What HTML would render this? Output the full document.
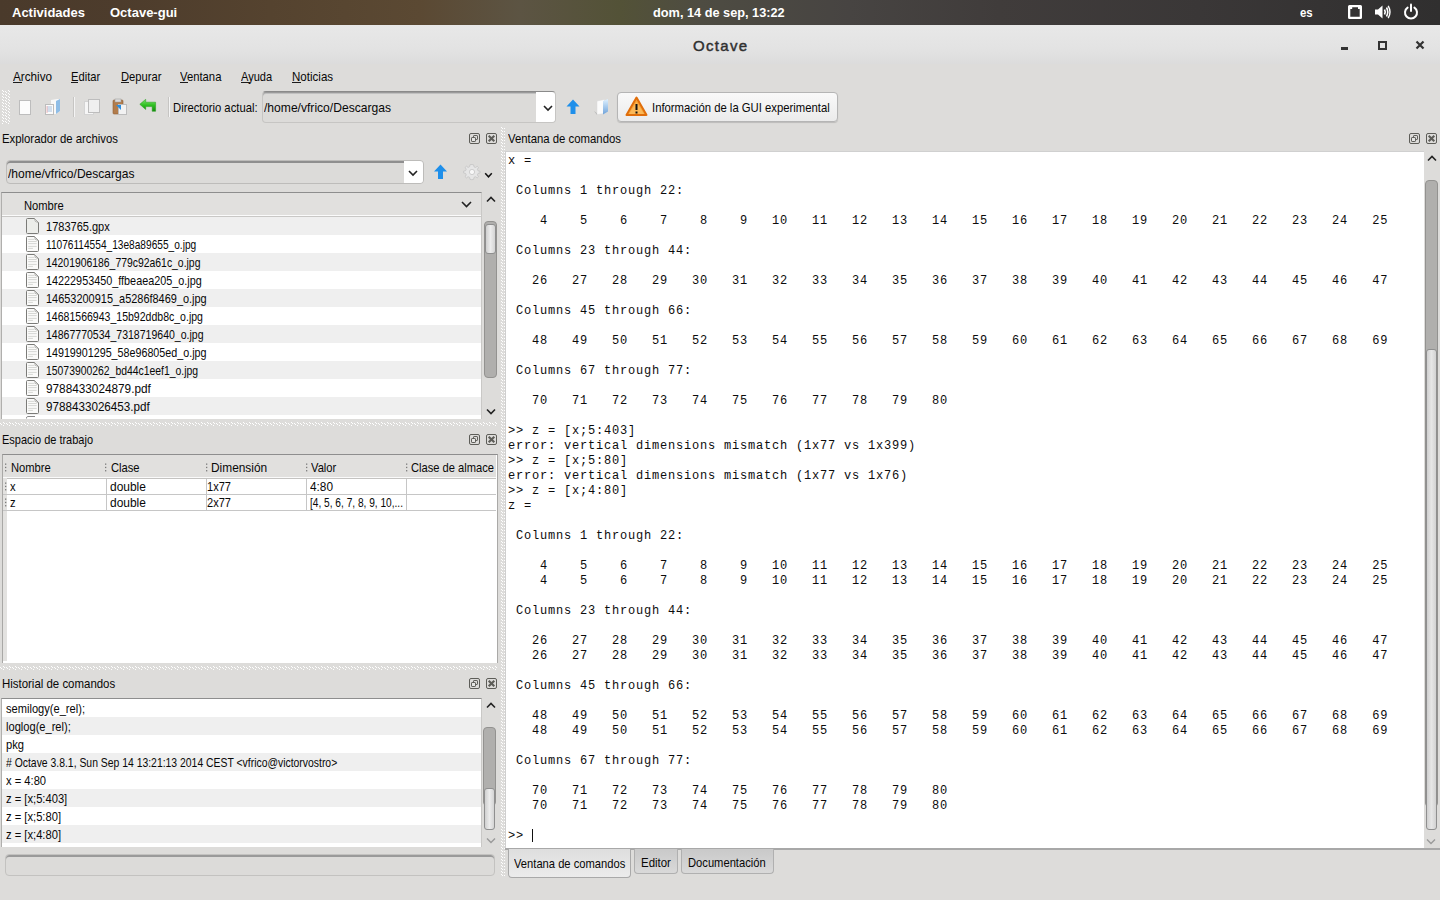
<!DOCTYPE html><html><head><meta charset="utf-8"><title>Octave</title><style>
*{margin:0;padding:0;box-sizing:border-box}
html,body{width:1440px;height:900px;overflow:hidden;background:#dddcda;font-family:"Liberation Sans",sans-serif;color:#1b1b1b}
.a{position:absolute}
.t{position:absolute;white-space:pre;transform-origin:0 0}
.mono{position:absolute;font-family:"Liberation Mono",monospace;font-size:12px;letter-spacing:.8px;line-height:15px;white-space:pre;color:#0c0c0c}
svg{position:absolute;overflow:visible}
</style></head><body>
<svg width="0" height="0" style="position:absolute"><defs><pattern id="dots" width="2" height="2" patternUnits="userSpaceOnUse"><rect width="1" height="1" fill="#f7f7f7"/><rect x="1" y="1" width="1" height="1" fill="#f7f7f7"/></pattern><pattern id="hd" width="6" height="4" patternUnits="userSpaceOnUse"><rect x="0" y="1" width="1" height="1" fill="#fff"/><rect x="1" y="2" width="1" height="1" fill="#fff"/><rect x="3" y="0" width="1" height="1" fill="#fff"/><rect x="4" y="1" width="1" height="1" fill="#fff"/><rect x="3" y="3" width="1" height="1" fill="#fff"/></pattern><pattern id="tbd" width="6" height="3" patternUnits="userSpaceOnUse"><rect x="0" y="0" width="1" height="1" fill="#fff"/><rect x="1" y="1" width="1" height="1" fill="#fff"/><rect x="3" y="1" width="1" height="1" fill="#fff"/><rect x="4" y="2" width="1" height="1" fill="#fff"/></pattern><pattern id="vd" width="5" height="3" patternUnits="userSpaceOnUse"><rect x="0" y="0" width="1" height="1" fill="#fff"/><rect x="1" y="1" width="1" height="1" fill="#fff"/><rect x="3" y="1" width="1" height="1" fill="#fff"/></pattern></defs></svg>
<div class="a" style="left:0px;top:0px;width:1440px;height:25px;background:linear-gradient(90deg,#4a3a2b 0px,#4d3c2c 120px,#55432f 270px,#5b4933 420px,#5c5443 520px,#535237 620px,#4e4c42 700px,#474442 850px,#403c3b 1000px,#3a3737 1200px,#302f2f 1440px)"></div>
<div class="t" style="left:12px;top:6px;font-size:13px;line-height:13px;transform:scaleX(1.0);color:#fff;font-weight:bold;">Actividades</div>
<div class="t" style="left:110px;top:6px;font-size:13px;line-height:13px;transform:scaleX(1.0);color:#fff;font-weight:bold;">Octave-gui</div>
<div class="t" style="left:653px;top:6px;font-size:13px;line-height:13px;transform:scaleX(0.98);color:#fff;font-weight:bold;">dom, 14 de sep, 13:22</div>
<div class="t" style="left:1300px;top:6px;font-size:13px;line-height:13px;transform:scaleX(0.88);color:#fff;font-weight:bold;">es</div>
<svg style="left:1347px;top:4px" width="16" height="16"><path d="M2.5 1 H13.5 Q15 1 15 2.5 V13.5 Q15 15 13.5 15 H2.5 Q1 15 1 13.5 V2.5 Q1 1 2.5 1Z M3.3 5.1 H5.2 V3.2 H11 V5.1 H12.7 V12.7 H3.3 Z" fill="#fff" fill-rule="evenodd"/></svg>
<svg style="left:1374px;top:4px" width="17" height="16"><path d="M1 5.5 H4 L8.5 1.5 V14.5 L4 10.5 H1Z" fill="#fff"/><path d="M10.5 5.5 Q12 8 10.5 10.5" stroke="#fff" stroke-width="1.6" fill="none"/><path d="M12.5 3.5 Q15 8 12.5 12.5" stroke="#fff" stroke-width="1.6" fill="none"/><path d="M14.2 1.8 Q17.8 8 14.2 14.2" stroke="#fff" stroke-width="1.4" fill="none"/></svg>
<svg style="left:1403px;top:3px" width="16" height="17"><path d="M4.6 4.6 A6 6 0 1 0 11.4 4.6" stroke="#fff" stroke-width="2" fill="none" stroke-linecap="round"/><path d="M8 1.5 V8" stroke="#fff" stroke-width="2" stroke-linecap="round"/></svg>
<div class="a" style="left:0px;top:25px;width:1440px;height:39px;background:linear-gradient(#e8e8e8,#e3e3e3 60%,#dcdcdc)"></div>
<div class="t" style="left:693px;top:38px;font-size:15px;line-height:15px;transform:scaleX(1.0);color:#303030;font-weight:normal;letter-spacing:1.3px;-webkit-text-stroke:.45px #303030">Octave</div>
<div class="a" style="left:1341px;top:47px;width:7px;height:3px;background:#333"></div>
<div class="a" style="left:1378px;top:41px;width:9px;height:9px;border:2px solid #333"></div>
<svg style="left:1415px;top:40px" width="10" height="10"><path d="M1.5 1.5L8.5 8.5M8.5 1.5L1.5 8.5" stroke="#333" stroke-width="2.2" stroke-linecap="butt"/></svg>
<div class="t" style="left:13px;top:70px;font-size:13px;line-height:13px;transform:scaleX(0.9);color:#080808;font-weight:normal;">Archivo</div>
<div class="a" style="left:13px;top:82px;width:9px;height:1px;background:#1b1b1b"></div>
<div class="t" style="left:71px;top:70px;font-size:13px;line-height:13px;transform:scaleX(0.86);color:#080808;font-weight:normal;">Editar</div>
<div class="a" style="left:71px;top:82px;width:7px;height:1px;background:#1b1b1b"></div>
<div class="t" style="left:121px;top:70px;font-size:13px;line-height:13px;transform:scaleX(0.86);color:#080808;font-weight:normal;">Depurar</div>
<div class="a" style="left:121px;top:82px;width:8px;height:1px;background:#1b1b1b"></div>
<div class="t" style="left:180px;top:70px;font-size:13px;line-height:13px;transform:scaleX(0.868);color:#080808;font-weight:normal;">Ventana</div>
<div class="a" style="left:180px;top:82px;width:8px;height:1px;background:#1b1b1b"></div>
<div class="t" style="left:241px;top:70px;font-size:13px;line-height:13px;transform:scaleX(0.85);color:#080808;font-weight:normal;">Ayuda</div>
<div class="a" style="left:241px;top:82px;width:9px;height:1px;background:#1b1b1b"></div>
<div class="t" style="left:292px;top:70px;font-size:13px;line-height:13px;transform:scaleX(0.889);color:#080808;font-weight:normal;">Noticias</div>
<div class="a" style="left:292px;top:82px;width:9px;height:1px;background:#1b1b1b"></div>
<svg style="left:2px;top:90px" width="8" height="34"><rect width="8" height="34" fill="url(#tbd)"/></svg>
<svg style="left:19px;top:100px" width="13" height="16"><rect x="0.5" y="0.5" width="11" height="14" fill="#fcfcfc" stroke="#bdbdbd"/></svg>
<svg style="left:44px;top:98px" width="18" height="18"><path d="M7 2 L13 1 L16 1 L16 13 L12 16 L7 16Z" fill="#f8f8f8"/><path d="M12 3 L16 1 L16 13 L12 16Z" fill="#8fbde6"/><rect x="1.5" y="6.5" width="8" height="10" fill="#fbfbfb" stroke="#bcbcbc"/><path d="M3 9h5M3 11h5M3 13h5" stroke="#a9c2df" stroke-width="1"/><path d="M3 8v7" stroke="#f0a0a0" stroke-width=".7"/></svg>
<div class="a" style="left:73px;top:97px;width:1px;height:20px;background:#c6c5c3;box-shadow:1px 0 0 #f4f4f4"></div>
<svg style="left:84px;top:98px" width="18" height="18"><rect x="0.5" y="3.5" width="9" height="13" fill="#f6f6f6" stroke="#d4d4d4"/><rect x="4.5" y="1.5" width="11" height="13" fill="#efefef" stroke="#bdbdbd"/></svg>
<svg style="left:112px;top:98px" width="18" height="18"><rect x="1" y="2" width="10" height="14" rx="1" fill="#b27c4b" stroke="#8f6038" stroke-width=".6"/><rect x="3" y="1" width="6" height="3" fill="#dcdcdc" stroke="#999" stroke-width=".5"/><rect x="6.5" y="6.5" width="8" height="10" fill="#f2f2f2" stroke="#bdbdbd"/><path d="M4 7 L9 7 L9 12 Z" fill="#2a8ee0"/></svg>
<svg style="left:139px;top:98px" width="18" height="16"><defs><linearGradient id="gr" x1="0" y1="0" x2="0" y2="1"><stop offset="0" stop-color="#7be36a"/><stop offset=".5" stop-color="#2fbf22"/><stop offset="1" stop-color="#148a0e"/></linearGradient></defs><path d="M0.8 6.3 L6.7 1.3 L6.7 4.2 L16.6 4.2 L16.6 13.3 L13.2 13.3 L13.2 8.6 L6.7 8.6 L6.7 11.5 Z" fill="url(#gr)" stroke="#1e9a16" stroke-width=".5"/></svg>
<div class="a" style="left:168px;top:97px;width:1px;height:20px;background:#c6c5c3;box-shadow:1px 0 0 #f4f4f4"></div>
<div class="t" style="left:173px;top:101px;font-size:13px;line-height:13px;transform:scaleX(0.867);color:#080808;font-weight:normal;">Directorio actual:</div>
<div class="a" style="left:262px;top:91px;width:294px;height:32px;border:1px solid #c6c5c3;border-top-color:#8a8a8a;border-radius:4px;background:#dcdbd9;box-shadow:inset 0 1px 0 #9a9a9a,inset 0 2px 0 #c0c0c0"></div>
<div class="a" style="left:536px;top:92px;width:19px;height:30px;background:#fff;border-radius:0 3px 3px 0"></div>
<svg style="left:543px;top:105px" width="10" height="7"><path d="M1 1 L5 5 L9 1" fill="none" stroke="#222" stroke-width="1.6"/></svg>
<div class="t" style="left:264px;top:101px;font-size:13px;line-height:13px;transform:scaleX(0.93);color:#080808;font-weight:normal;">/home/vfrico/Descargas</div>
<svg style="left:566px;top:99px" width="14" height="16"><path d="M7 0.5 L13.5 7.5 L9.5 7.5 L9.5 15 L4.5 15 L4.5 7.5 L0.5 7.5 Z" fill="#1e8fea"/></svg>
<svg style="left:593px;top:98px" width="16" height="18"><defs><linearGradient id="fb" x1="0" y1="0" x2="0" y2="1"><stop offset="0" stop-color="#dff1ff"/><stop offset="1" stop-color="#6fa3da"/></linearGradient></defs><path d="M1 13 L4.5 15.5 L4 17 Z" fill="#b5b5b5"/><path d="M4 3 L11.5 1.5 L11.5 15.5 L4 16.5 Z" fill="#fbfbfb" stroke="#d8d8d8" stroke-width=".5"/><path d="M10 3 L15 1 L15 13.5 L10 16.5 Z" fill="url(#fb)"/></svg>
<div class="a" style="left:617px;top:92px;width:221px;height:30px;border:1px solid #b5b5b5;border-radius:4px;background:linear-gradient(#f9f9f9,#ebebeb);box-shadow:0 1px 1px rgba(0,0,0,.15)"></div>
<svg style="left:625px;top:96px" width="23" height="21"><path d="M11.5 1.5 L21.5 19 L1.5 19 Z" fill="#f7a53a" stroke="#e06e0b" stroke-width="2" stroke-linejoin="round"/><path d="M11.5 6 L19 18 L4 18Z" fill="#fbb858"/><rect x="10.5" y="8" width="2" height="6" fill="#111"/><rect x="10.5" y="15.5" width="2" height="2" fill="#111"/></svg>
<div class="t" style="left:652px;top:101px;font-size:13px;line-height:13px;transform:scaleX(0.869);color:#080808;font-weight:normal;">Información de la GUI experimental</div>
<div class="t" style="left:2px;top:132px;font-size:13px;line-height:13px;transform:scaleX(0.872);color:#080808;font-weight:normal;">Explorador de archivos</div>
<svg style="left:469px;top:133px" width="11" height="11"><rect x="0.5" y="0.5" width="10" height="10" rx="1.5" fill="none" stroke="#5d5d58"/><rect x="4.5" y="2.5" width="4" height="4" rx=".6" fill="none" stroke="#5d5d58"/><rect x="2.5" y="4.5" width="4" height="4" rx=".6" fill="#e6e6e4" stroke="#5d5d58"/></svg>
<svg style="left:486px;top:133px" width="11" height="11"><rect x="0.5" y="0.5" width="10" height="10" rx="1.5" fill="none" stroke="#5d5d58"/><path d="M2.7 2.7L8.3 8.3M8.3 2.7L2.7 8.3" stroke="#5d5d58" stroke-width="2.1"/></svg>
<div class="a" style="left:6px;top:160px;width:418px;height:24px;border:1px solid #bdbcba;border-radius:4px;background:#dcdbd9;box-shadow:inset 0 2px 0 #8f8f8f"></div>
<div class="a" style="left:404px;top:161px;width:19px;height:22px;background:#fff;border-radius:0 3px 3px 0"></div>
<svg style="left:408px;top:170px" width="10" height="7"><path d="M1 1 L5 5 L9 1" fill="none" stroke="#222" stroke-width="1.6"/></svg>
<div class="t" style="left:8px;top:167px;font-size:13px;line-height:13px;transform:scaleX(0.926);color:#080808;font-weight:normal;">/home/vfrico/Descargas</div>
<svg style="left:434px;top:164px" width="14" height="16"><path d="M6.5 0.5 L13 7.5 L9 7.5 L9 15 L4 15 L4 7.5 L0 7.5 Z" fill="#1e8fea"/></svg>
<svg style="left:463px;top:163px" width="18" height="18"><g fill="#e6e6e6" stroke="#c4c4c4" stroke-width=".8"><path d="M9 1.5l1.6.3.4 2 1.5.7 1.7-1.2 1.3 1.2-1.1 1.8.6 1.5 2 .4v1.8l-2 .4-.6 1.5 1.1 1.8-1.3 1.2-1.7-1.2-1.5.7-.4 2-1.8.3-1.8-.3-.4-2-1.5-.7-1.7 1.2-1.3-1.2 1.1-1.8-.6-1.5-2-.4V8.1l2-.4.6-1.5-1.1-1.8 1.3-1.2 1.7 1.2 1.5-.7.4-2z"/></g><circle cx="9" cy="9" r="2.6" fill="#f8f8f8" stroke="#c4c4c4" stroke-width=".8"/></svg>
<svg style="left:484px;top:172px" width="10" height="7"><path d="M1.2 1.2 L4.5 4.8 L7.8 1.2" fill="none" stroke="#111" stroke-width="1.5"/></svg>
<div class="a" style="left:1px;top:192px;width:481px;height:227px;background:#fff;border-left:1px solid #b0afad;border-top:1px solid #8e8e8e;border-right:1px solid #c9c8c6"></div>
<div class="a" style="left:2px;top:193px;width:479px;height:22px;background:#e1e0de"></div>
<div class="a" style="left:2px;top:215px;width:479px;height:1px;background:#fbfbfb"></div>
<div class="a" style="left:2px;top:216px;width:479px;height:1px;background:#c9c8c6"></div>
<div class="t" style="left:24px;top:199px;font-size:13px;line-height:13px;transform:scaleX(0.86);color:#080808;font-weight:normal;">Nombre</div>
<svg style="left:461px;top:201px" width="11" height="7"><path d="M1 1 L5.5 5.5 L10 1" fill="none" stroke="#222" stroke-width="1.6"/></svg>
<div class="a" style="left:2px;top:217px;width:479px;height:18px;background:#efefef"></div>
<svg style="left:26px;top:218px" width="14" height="17"><path d="M0.5 1.5 Q0.5 0.5 1.5 0.5 L8.5 0.5 L12.5 4.5 L12.5 14.5 Q12.5 15.5 11.5 15.5 L1.5 15.5 Q0.5 15.5 0.5 14.5Z" fill="#fafaf9" stroke="#7b7b78" stroke-width="1"/><path d="M1 1 L8.5 1 L12 4.5 L12 15 L1 15Z" fill="#ecedea"/><path d="M8.5 0.8 Q8.5 4.3 12.2 4.5" fill="#fff" stroke="#9a9a97" stroke-width=".8"/></svg>
<div class="t" style="left:46px;top:220px;font-size:13px;line-height:13px;transform:scaleX(0.848);color:#080808;font-weight:normal;">1783765.gpx</div>
<svg style="left:26px;top:236px" width="14" height="17"><path d="M0.5 1.5 Q0.5 0.5 1.5 0.5 L8.5 0.5 L12.5 4.5 L12.5 14.5 Q12.5 15.5 11.5 15.5 L1.5 15.5 Q0.5 15.5 0.5 14.5Z" fill="#fafaf9" stroke="#7b7b78" stroke-width="1"/><path d="M2.2 3.4h6.3M2.2 5.5h8.5M2.2 7.6h8.5M2.2 10.4h8.5M2.2 12.4h4.7" stroke="#d6d7d4" stroke-width="1"/><path d="M8.5 0.8 Q8.5 4.3 12.2 4.5" fill="#fff" stroke="#9a9a97" stroke-width=".8"/></svg>
<div class="t" style="left:46px;top:238px;font-size:13px;line-height:13px;transform:scaleX(0.78);color:#080808;font-weight:normal;">11076114554_13e8a89655_o.jpg</div>
<div class="a" style="left:2px;top:253px;width:479px;height:18px;background:#efefef"></div>
<svg style="left:26px;top:254px" width="14" height="17"><path d="M0.5 1.5 Q0.5 0.5 1.5 0.5 L8.5 0.5 L12.5 4.5 L12.5 14.5 Q12.5 15.5 11.5 15.5 L1.5 15.5 Q0.5 15.5 0.5 14.5Z" fill="#fafaf9" stroke="#7b7b78" stroke-width="1"/><path d="M2.2 3.4h6.3M2.2 5.5h8.5M2.2 7.6h8.5M2.2 10.4h8.5M2.2 12.4h4.7" stroke="#d6d7d4" stroke-width="1"/><path d="M8.5 0.8 Q8.5 4.3 12.2 4.5" fill="#fff" stroke="#9a9a97" stroke-width=".8"/></svg>
<div class="t" style="left:46px;top:256px;font-size:13px;line-height:13px;transform:scaleX(0.8);color:#080808;font-weight:normal;">14201906186_779c92a61c_o.jpg</div>
<svg style="left:26px;top:272px" width="14" height="17"><path d="M0.5 1.5 Q0.5 0.5 1.5 0.5 L8.5 0.5 L12.5 4.5 L12.5 14.5 Q12.5 15.5 11.5 15.5 L1.5 15.5 Q0.5 15.5 0.5 14.5Z" fill="#fafaf9" stroke="#7b7b78" stroke-width="1"/><path d="M2.2 3.4h6.3M2.2 5.5h8.5M2.2 7.6h8.5M2.2 10.4h8.5M2.2 12.4h4.7" stroke="#d6d7d4" stroke-width="1"/><path d="M8.5 0.8 Q8.5 4.3 12.2 4.5" fill="#fff" stroke="#9a9a97" stroke-width=".8"/></svg>
<div class="t" style="left:46px;top:274px;font-size:13px;line-height:13px;transform:scaleX(0.833);color:#080808;font-weight:normal;">14222953450_ffbeaea205_o.jpg</div>
<div class="a" style="left:2px;top:289px;width:479px;height:18px;background:#efefef"></div>
<svg style="left:26px;top:290px" width="14" height="17"><path d="M0.5 1.5 Q0.5 0.5 1.5 0.5 L8.5 0.5 L12.5 4.5 L12.5 14.5 Q12.5 15.5 11.5 15.5 L1.5 15.5 Q0.5 15.5 0.5 14.5Z" fill="#fafaf9" stroke="#7b7b78" stroke-width="1"/><path d="M2.2 3.4h6.3M2.2 5.5h8.5M2.2 7.6h8.5M2.2 10.4h8.5M2.2 12.4h4.7" stroke="#d6d7d4" stroke-width="1"/><path d="M8.5 0.8 Q8.5 4.3 12.2 4.5" fill="#fff" stroke="#9a9a97" stroke-width=".8"/></svg>
<div class="t" style="left:46px;top:292px;font-size:13px;line-height:13px;transform:scaleX(0.842);color:#080808;font-weight:normal;">14653200915_a5286f8469_o.jpg</div>
<svg style="left:26px;top:308px" width="14" height="17"><path d="M0.5 1.5 Q0.5 0.5 1.5 0.5 L8.5 0.5 L12.5 4.5 L12.5 14.5 Q12.5 15.5 11.5 15.5 L1.5 15.5 Q0.5 15.5 0.5 14.5Z" fill="#fafaf9" stroke="#7b7b78" stroke-width="1"/><path d="M2.2 3.4h6.3M2.2 5.5h8.5M2.2 7.6h8.5M2.2 10.4h8.5M2.2 12.4h4.7" stroke="#d6d7d4" stroke-width="1"/><path d="M8.5 0.8 Q8.5 4.3 12.2 4.5" fill="#fff" stroke="#9a9a97" stroke-width=".8"/></svg>
<div class="t" style="left:46px;top:310px;font-size:13px;line-height:13px;transform:scaleX(0.81);color:#080808;font-weight:normal;">14681566943_15b92ddb8c_o.jpg</div>
<div class="a" style="left:2px;top:325px;width:479px;height:18px;background:#efefef"></div>
<svg style="left:26px;top:326px" width="14" height="17"><path d="M0.5 1.5 Q0.5 0.5 1.5 0.5 L8.5 0.5 L12.5 4.5 L12.5 14.5 Q12.5 15.5 11.5 15.5 L1.5 15.5 Q0.5 15.5 0.5 14.5Z" fill="#fafaf9" stroke="#7b7b78" stroke-width="1"/><path d="M2.2 3.4h6.3M2.2 5.5h8.5M2.2 7.6h8.5M2.2 10.4h8.5M2.2 12.4h4.7" stroke="#d6d7d4" stroke-width="1"/><path d="M8.5 0.8 Q8.5 4.3 12.2 4.5" fill="#fff" stroke="#9a9a97" stroke-width=".8"/></svg>
<div class="t" style="left:46px;top:328px;font-size:13px;line-height:13px;transform:scaleX(0.81);color:#080808;font-weight:normal;">14867770534_7318719640_o.jpg</div>
<svg style="left:26px;top:344px" width="14" height="17"><path d="M0.5 1.5 Q0.5 0.5 1.5 0.5 L8.5 0.5 L12.5 4.5 L12.5 14.5 Q12.5 15.5 11.5 15.5 L1.5 15.5 Q0.5 15.5 0.5 14.5Z" fill="#fafaf9" stroke="#7b7b78" stroke-width="1"/><path d="M2.2 3.4h6.3M2.2 5.5h8.5M2.2 7.6h8.5M2.2 10.4h8.5M2.2 12.4h4.7" stroke="#d6d7d4" stroke-width="1"/><path d="M8.5 0.8 Q8.5 4.3 12.2 4.5" fill="#fff" stroke="#9a9a97" stroke-width=".8"/></svg>
<div class="t" style="left:46px;top:346px;font-size:13px;line-height:13px;transform:scaleX(0.825);color:#080808;font-weight:normal;">14919901295_58e96805ed_o.jpg</div>
<div class="a" style="left:2px;top:361px;width:479px;height:18px;background:#efefef"></div>
<svg style="left:26px;top:362px" width="14" height="17"><path d="M0.5 1.5 Q0.5 0.5 1.5 0.5 L8.5 0.5 L12.5 4.5 L12.5 14.5 Q12.5 15.5 11.5 15.5 L1.5 15.5 Q0.5 15.5 0.5 14.5Z" fill="#fafaf9" stroke="#7b7b78" stroke-width="1"/><path d="M2.2 3.4h6.3M2.2 5.5h8.5M2.2 7.6h8.5M2.2 10.4h8.5M2.2 12.4h4.7" stroke="#d6d7d4" stroke-width="1"/><path d="M8.5 0.8 Q8.5 4.3 12.2 4.5" fill="#fff" stroke="#9a9a97" stroke-width=".8"/></svg>
<div class="t" style="left:46px;top:364px;font-size:13px;line-height:13px;transform:scaleX(0.8);color:#080808;font-weight:normal;">15073900262_bd44c1eef1_o.jpg</div>
<svg style="left:26px;top:380px" width="14" height="17"><path d="M0.5 1.5 Q0.5 0.5 1.5 0.5 L8.5 0.5 L12.5 4.5 L12.5 14.5 Q12.5 15.5 11.5 15.5 L1.5 15.5 Q0.5 15.5 0.5 14.5Z" fill="#fafaf9" stroke="#7b7b78" stroke-width="1"/><path d="M2.2 3.4h6.3M2.2 5.5h8.5M2.2 7.6h8.5M2.2 10.4h8.5M2.2 12.4h4.7" stroke="#d6d7d4" stroke-width="1"/><path d="M8.5 0.8 Q8.5 4.3 12.2 4.5" fill="#fff" stroke="#9a9a97" stroke-width=".8"/></svg>
<div class="t" style="left:46px;top:382px;font-size:13px;line-height:13px;transform:scaleX(0.906);color:#080808;font-weight:normal;">9788433024879.pdf</div>
<div class="a" style="left:2px;top:397px;width:479px;height:18px;background:#efefef"></div>
<svg style="left:26px;top:398px" width="14" height="17"><path d="M0.5 1.5 Q0.5 0.5 1.5 0.5 L8.5 0.5 L12.5 4.5 L12.5 14.5 Q12.5 15.5 11.5 15.5 L1.5 15.5 Q0.5 15.5 0.5 14.5Z" fill="#fafaf9" stroke="#7b7b78" stroke-width="1"/><path d="M2.2 3.4h6.3M2.2 5.5h8.5M2.2 7.6h8.5M2.2 10.4h8.5M2.2 12.4h4.7" stroke="#d6d7d4" stroke-width="1"/><path d="M8.5 0.8 Q8.5 4.3 12.2 4.5" fill="#fff" stroke="#9a9a97" stroke-width=".8"/></svg>
<div class="t" style="left:46px;top:400px;font-size:13px;line-height:13px;transform:scaleX(0.897);color:#080808;font-weight:normal;">9788433026453.pdf</div>
<svg style="left:26px;top:416px" width="14" height="3"><path d="M0.5 2.5 Q0.5 0.5 1.5 0.5 L9 0.5" fill="none" stroke="#7a7a7a" stroke-width=".9"/></svg>
<div class="a" style="left:482px;top:193px;width:16px;height:226px;background:#dddcda"></div>
<svg style="left:486px;top:196px" width="10" height="7"><path d="M1 5.5 L5 1.5 L9 5.5" fill="none" stroke="#222" stroke-width="1.6"/></svg>
<div class="a" style="left:484px;top:221px;width:13px;height:157px;border-radius:4px;background:#b0afad;border:1px solid #939290"></div>
<div class="a" style="left:485px;top:224px;width:11px;height:30px;border-radius:3px;background:linear-gradient(90deg,#d0d0d0,#ececec 50%,#d4d4d4);border:1px solid #8f8f8f"></div>
<svg style="left:486px;top:408px" width="10" height="7"><path d="M1 1.5 L5 5.5 L9 1.5" fill="none" stroke="#222" stroke-width="1.6"/></svg>
<svg style="left:0px;top:422px" width="498" height="4"><rect width="498" height="4" fill="url(#hd)"/></svg>
<div class="t" style="left:2px;top:433px;font-size:13px;line-height:13px;transform:scaleX(0.845);color:#080808;font-weight:normal;">Espacio de trabajo</div>
<svg style="left:469px;top:434px" width="11" height="11"><rect x="0.5" y="0.5" width="10" height="10" rx="1.5" fill="none" stroke="#5d5d58"/><rect x="4.5" y="2.5" width="4" height="4" rx=".6" fill="none" stroke="#5d5d58"/><rect x="2.5" y="4.5" width="4" height="4" rx=".6" fill="#e6e6e4" stroke="#5d5d58"/></svg>
<svg style="left:486px;top:434px" width="11" height="11"><rect x="0.5" y="0.5" width="10" height="10" rx="1.5" fill="none" stroke="#5d5d58"/><path d="M2.7 2.7L8.3 8.3M8.3 2.7L2.7 8.3" stroke="#5d5d58" stroke-width="2.1"/></svg>
<div class="a" style="left:2px;top:454px;width:496px;height:209px;background:#fff;border-left:1px solid #a9a8a6;border-top:1px solid #8e8e8e;border-right:1px solid #aaa9a7"></div>
<div class="a" style="left:3px;top:455px;width:493px;height:23px;background:#e1e0de"></div>
<div class="a" style="left:3px;top:477px;width:493px;height:1px;background:#fafafa"></div>
<div class="a" style="left:3px;top:478px;width:493px;height:1px;background:#c4c3c1"></div>
<div class="a" style="left:3px;top:478px;width:4px;height:183px;background:#e3e2e0"></div>
<svg style="left:5px;top:463px" width="2" height="10"><rect x="0" y="0.5" width="1.3" height="1.3" fill="#7a7a7a"/><rect x="0" y="3.8" width="1.3" height="1.3" fill="#7a7a7a"/><rect x="0" y="7.1" width="1.3" height="1.3" fill="#7a7a7a"/></svg>
<svg style="left:105px;top:463px" width="2" height="10"><rect x="0" y="0.5" width="1.3" height="1.3" fill="#7a7a7a"/><rect x="0" y="3.8" width="1.3" height="1.3" fill="#7a7a7a"/><rect x="0" y="7.1" width="1.3" height="1.3" fill="#7a7a7a"/></svg>
<svg style="left:206px;top:463px" width="2" height="10"><rect x="0" y="0.5" width="1.3" height="1.3" fill="#7a7a7a"/><rect x="0" y="3.8" width="1.3" height="1.3" fill="#7a7a7a"/><rect x="0" y="7.1" width="1.3" height="1.3" fill="#7a7a7a"/></svg>
<svg style="left:306px;top:463px" width="2" height="10"><rect x="0" y="0.5" width="1.3" height="1.3" fill="#7a7a7a"/><rect x="0" y="3.8" width="1.3" height="1.3" fill="#7a7a7a"/><rect x="0" y="7.1" width="1.3" height="1.3" fill="#7a7a7a"/></svg>
<svg style="left:406px;top:463px" width="2" height="10"><rect x="0" y="0.5" width="1.3" height="1.3" fill="#7a7a7a"/><rect x="0" y="3.8" width="1.3" height="1.3" fill="#7a7a7a"/><rect x="0" y="7.1" width="1.3" height="1.3" fill="#7a7a7a"/></svg>
<div class="a" style="left:106px;top:479px;width:1px;height:32px;background:#c6c6c6"></div>
<div class="a" style="left:206px;top:479px;width:1px;height:32px;background:#c6c6c6"></div>
<div class="a" style="left:306px;top:479px;width:1px;height:32px;background:#c6c6c6"></div>
<div class="a" style="left:406px;top:479px;width:1px;height:32px;background:#c6c6c6"></div>
<div class="a" style="left:3px;top:494px;width:493px;height:1px;background:#c6c6c6"></div>
<div class="a" style="left:3px;top:510px;width:493px;height:1px;background:#c6c6c6"></div>
<div class="t" style="left:11px;top:461px;font-size:13px;line-height:13px;transform:scaleX(0.86);color:#080808;font-weight:normal;">Nombre</div>
<div class="t" style="left:111px;top:461px;font-size:13px;line-height:13px;transform:scaleX(0.86);color:#080808;font-weight:normal;">Clase</div>
<div class="t" style="left:211px;top:461px;font-size:13px;line-height:13px;transform:scaleX(0.915);color:#080808;font-weight:normal;">Dimensión</div>
<div class="t" style="left:311px;top:461px;font-size:13px;line-height:13px;transform:scaleX(0.86);color:#080808;font-weight:normal;">Valor</div>
<div class="t" style="left:411px;top:461px;font-size:13px;line-height:13px;transform:scaleX(0.857);color:#080808;font-weight:normal;">Clase de almace</div>
<div class="t" style="left:10px;top:480px;font-size:13px;line-height:13px;transform:scaleX(0.86);color:#080808;font-weight:normal;">x</div>
<div class="t" style="left:10px;top:496px;font-size:13px;line-height:13px;transform:scaleX(0.86);color:#080808;font-weight:normal;">z</div>
<svg style="left:5px;top:482px" width="2" height="10"><rect x="0" y="0.5" width="1.3" height="1.3" fill="#7a7a7a"/><rect x="0" y="3.8" width="1.3" height="1.3" fill="#7a7a7a"/><rect x="0" y="7.1" width="1.3" height="1.3" fill="#7a7a7a"/></svg>
<svg style="left:5px;top:498px" width="2" height="10"><rect x="0" y="0.5" width="1.3" height="1.3" fill="#7a7a7a"/><rect x="0" y="3.8" width="1.3" height="1.3" fill="#7a7a7a"/><rect x="0" y="7.1" width="1.3" height="1.3" fill="#7a7a7a"/></svg>
<div class="t" style="left:110px;top:480px;font-size:13px;line-height:13px;transform:scaleX(0.92);color:#080808;font-weight:normal;">double</div>
<div class="t" style="left:110px;top:496px;font-size:13px;line-height:13px;transform:scaleX(0.92);color:#080808;font-weight:normal;">double</div>
<div class="t" style="left:207px;top:480px;font-size:13px;line-height:13px;transform:scaleX(0.85);color:#080808;font-weight:normal;">1x77</div>
<div class="t" style="left:207px;top:496px;font-size:13px;line-height:13px;transform:scaleX(0.85);color:#080808;font-weight:normal;">2x77</div>
<div class="t" style="left:310px;top:480px;font-size:13px;line-height:13px;transform:scaleX(0.91);color:#080808;font-weight:normal;">4:80</div>
<div class="t" style="left:310px;top:496px;font-size:13px;line-height:13px;transform:scaleX(0.78);color:#080808;font-weight:normal;">[4, 5, 6, 7, 8, 9, 10,...</div>
<svg style="left:0px;top:666px" width="498" height="4"><rect width="498" height="4" fill="url(#hd)"/></svg>
<div class="t" style="left:2px;top:677px;font-size:13px;line-height:13px;transform:scaleX(0.88);color:#080808;font-weight:normal;">Historial de comandos</div>
<svg style="left:469px;top:678px" width="11" height="11"><rect x="0.5" y="0.5" width="10" height="10" rx="1.5" fill="none" stroke="#5d5d58"/><rect x="4.5" y="2.5" width="4" height="4" rx=".6" fill="none" stroke="#5d5d58"/><rect x="2.5" y="4.5" width="4" height="4" rx=".6" fill="#e6e6e4" stroke="#5d5d58"/></svg>
<svg style="left:486px;top:678px" width="11" height="11"><rect x="0.5" y="0.5" width="10" height="10" rx="1.5" fill="none" stroke="#5d5d58"/><path d="M2.7 2.7L8.3 8.3M8.3 2.7L2.7 8.3" stroke="#5d5d58" stroke-width="2.1"/></svg>
<div class="a" style="left:1px;top:698px;width:481px;height:149px;background:#fff;border-left:1px solid #b0afad;border-top:1px solid #8e8e8e;border-right:1px solid #c9c8c6"></div>
<div class="t" style="left:6px;top:702px;font-size:13px;line-height:13px;transform:scaleX(0.854);color:#080808;font-weight:normal;">semilogy(e_rel);</div>
<div class="a" style="left:2px;top:717px;width:479px;height:18px;background:#efefef"></div>
<div class="t" style="left:6px;top:720px;font-size:13px;line-height:13px;transform:scaleX(0.854);color:#080808;font-weight:normal;">loglog(e_rel);</div>
<div class="t" style="left:6px;top:738px;font-size:13px;line-height:13px;transform:scaleX(0.86);color:#080808;font-weight:normal;">pkg</div>
<div class="a" style="left:2px;top:753px;width:479px;height:18px;background:#efefef"></div>
<div class="t" style="left:6px;top:756px;font-size:13px;line-height:13px;transform:scaleX(0.8);color:#080808;font-weight:normal;"># Octave 3.8.1, Sun Sep 14 13:21:13 2014 CEST &lt;vfrico@victorvostro&gt;</div>
<div class="t" style="left:6px;top:774px;font-size:13px;line-height:13px;transform:scaleX(0.86);color:#080808;font-weight:normal;">x = 4:80</div>
<div class="a" style="left:2px;top:789px;width:479px;height:18px;background:#efefef"></div>
<div class="t" style="left:6px;top:792px;font-size:13px;line-height:13px;transform:scaleX(0.86);color:#080808;font-weight:normal;">z = [x;5:403]</div>
<div class="t" style="left:6px;top:810px;font-size:13px;line-height:13px;transform:scaleX(0.86);color:#080808;font-weight:normal;">z = [x;5:80]</div>
<div class="a" style="left:2px;top:825px;width:479px;height:18px;background:#efefef"></div>
<div class="t" style="left:6px;top:828px;font-size:13px;line-height:13px;transform:scaleX(0.86);color:#080808;font-weight:normal;">z = [x;4:80]</div>
<div class="a" style="left:482px;top:698px;width:16px;height:149px;background:#dddcda"></div>
<svg style="left:486px;top:702px" width="10" height="7"><path d="M1 5.5 L5 1.5 L9 5.5" fill="none" stroke="#222" stroke-width="1.6"/></svg>
<div class="a" style="left:483px;top:727px;width:13px;height:79px;border-radius:4px;background:#b0afad;border:1px solid #939290"></div>
<div class="a" style="left:484px;top:788px;width:11px;height:42px;border-radius:3px;background:linear-gradient(90deg,#d0d0d0,#ececec 50%,#d4d4d4);border:1px solid #8f8f8f"></div>
<svg style="left:486px;top:837px" width="10" height="7"><path d="M1 1.5 L5 5.5 L9 1.5" fill="none" stroke="#9a9a9a" stroke-width="1.4"/></svg>
<div class="a" style="left:5px;top:854px;width:490px;height:22px;border:1px solid #c3c2c0;border-radius:4px;background:#dcdbd9;box-shadow:inset 0 2px 0 #9a9a9a"></div>
<svg style="left:501px;top:127px" width="5" height="749"><rect width="5" height="749" fill="url(#vd)"/></svg>
<div class="t" style="left:508px;top:132px;font-size:13px;line-height:13px;transform:scaleX(0.873);color:#080808;font-weight:normal;">Ventana de comandos</div>
<svg style="left:1409px;top:133px" width="11" height="11"><rect x="0.5" y="0.5" width="10" height="10" rx="1.5" fill="none" stroke="#5d5d58"/><rect x="4.5" y="2.5" width="4" height="4" rx=".6" fill="none" stroke="#5d5d58"/><rect x="2.5" y="4.5" width="4" height="4" rx=".6" fill="#e6e6e4" stroke="#5d5d58"/></svg>
<svg style="left:1426px;top:133px" width="11" height="11"><rect x="0.5" y="0.5" width="10" height="10" rx="1.5" fill="none" stroke="#5d5d58"/><path d="M2.7 2.7L8.3 8.3M8.3 2.7L2.7 8.3" stroke="#5d5d58" stroke-width="2.1"/></svg>
<div class="a" style="left:505px;top:151px;width:919px;height:698px;background:#fff;border-left:1px solid #cfcfcf;border-top:1px solid #d0d0d0"></div>
<div class="mono" style="left:508px;top:154px">x =

 Columns 1 through 22:

    4    5    6    7    8    9   10   11   12   13   14   15   16   17   18   19   20   21   22   23   24   25

 Columns 23 through 44:

   26   27   28   29   30   31   32   33   34   35   36   37   38   39   40   41   42   43   44   45   46   47

 Columns 45 through 66:

   48   49   50   51   52   53   54   55   56   57   58   59   60   61   62   63   64   65   66   67   68   69

 Columns 67 through 77:

   70   71   72   73   74   75   76   77   78   79   80

&gt;&gt; z = [x;5:403]
error: vertical dimensions mismatch (1x77 vs 1x399)
&gt;&gt; z = [x;5:80]
error: vertical dimensions mismatch (1x77 vs 1x76)
&gt;&gt; z = [x;4:80]
z =

 Columns 1 through 22:

    4    5    6    7    8    9   10   11   12   13   14   15   16   17   18   19   20   21   22   23   24   25
    4    5    6    7    8    9   10   11   12   13   14   15   16   17   18   19   20   21   22   23   24   25

 Columns 23 through 44:

   26   27   28   29   30   31   32   33   34   35   36   37   38   39   40   41   42   43   44   45   46   47
   26   27   28   29   30   31   32   33   34   35   36   37   38   39   40   41   42   43   44   45   46   47

 Columns 45 through 66:

   48   49   50   51   52   53   54   55   56   57   58   59   60   61   62   63   64   65   66   67   68   69
   48   49   50   51   52   53   54   55   56   57   58   59   60   61   62   63   64   65   66   67   68   69

 Columns 67 through 77:

   70   71   72   73   74   75   76   77   78   79   80
   70   71   72   73   74   75   76   77   78   79   80

&gt;&gt; </div>
<div class="a" style="left:532px;top:829px;width:1px;height:13px;background:#111"></div>
<div class="a" style="left:1424px;top:152px;width:16px;height:697px;background:#dddcda"></div>
<svg style="left:1427px;top:155px" width="10" height="7"><path d="M1 5.5 L5 1.5 L9 5.5" fill="none" stroke="#222" stroke-width="1.6"/></svg>
<div class="a" style="left:1425px;top:180px;width:13px;height:627px;border-radius:4px;background:#b0afad;border:1px solid #939290"></div>
<div class="a" style="left:1426px;top:349px;width:11px;height:481px;border-radius:3px;background:linear-gradient(90deg,#d0d0d0,#e6e6e6 50%,#d2d2d2);border:1px solid #8f8f8f"></div>
<svg style="left:1426px;top:838px" width="10" height="7"><path d="M1 1.5 L5 5.5 L9 1.5" fill="none" stroke="#9a9a9a" stroke-width="1.4"/></svg>
<div class="a" style="left:505px;top:848px;width:935px;height:2px;background:#a8a8a8"></div>
<div class="a" style="left:508px;top:849px;width:123px;height:29px;border:1px solid #a9a9a9;border-top:none;border-radius:0 0 4px 4px;background:linear-gradient(#dedede,#ececec)"></div>
<div class="t" style="left:514px;top:857px;font-size:13px;line-height:13px;transform:scaleX(0.86);color:#080808;font-weight:normal;">Ventana de comandos</div>
<div class="a" style="left:634px;top:849px;width:44px;height:25px;border:1px solid #b0b0b0;border-top:none;border-radius:0 0 4px 4px;background:linear-gradient(#c9c9c9,#d9d9d9)"></div>
<div class="t" style="left:641px;top:856px;font-size:13px;line-height:13px;transform:scaleX(0.88);color:#080808;font-weight:normal;">Editor</div>
<div class="a" style="left:681px;top:849px;width:93px;height:25px;border:1px solid #b0b0b0;border-top:none;border-radius:0 0 4px 4px;background:linear-gradient(#c9c9c9,#d9d9d9)"></div>
<div class="t" style="left:688px;top:856px;font-size:13px;line-height:13px;transform:scaleX(0.86);color:#080808;font-weight:normal;">Documentación</div>
</body></html>
